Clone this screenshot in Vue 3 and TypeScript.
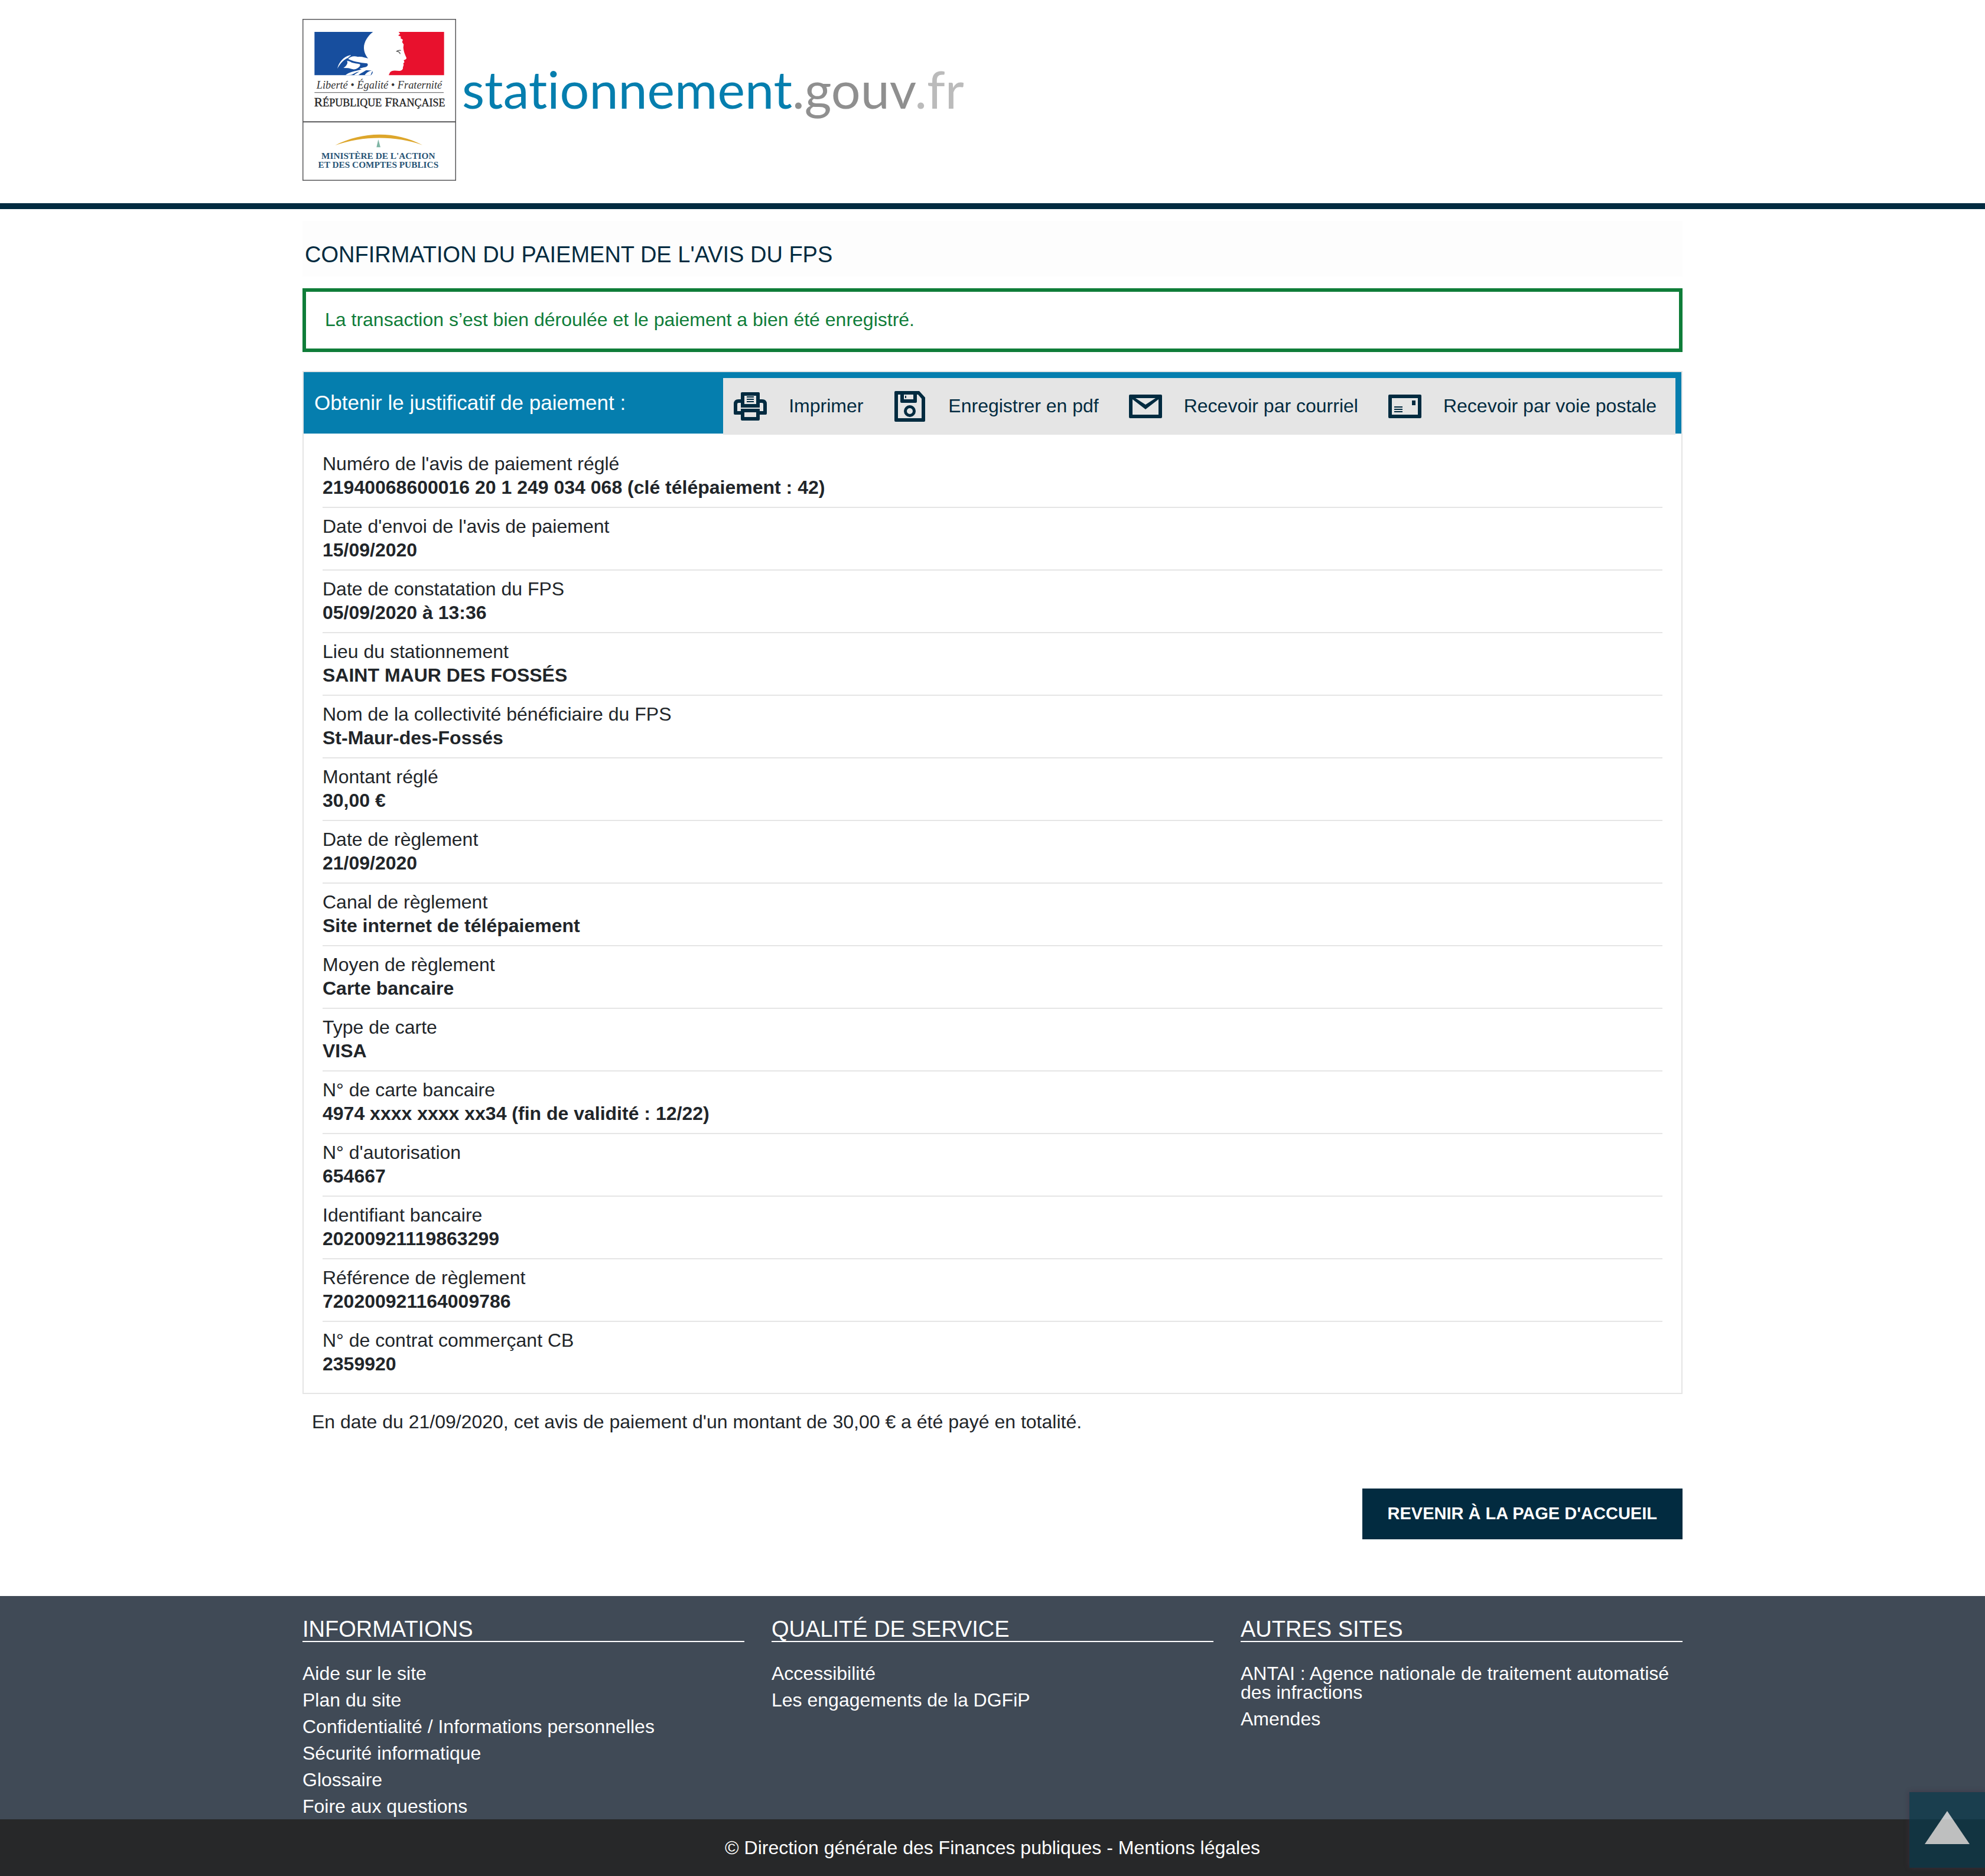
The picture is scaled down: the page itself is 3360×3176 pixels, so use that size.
<script setup lang="ts">
interface Detail {
  label: string
  value: string
}

interface LinkGroup {
  title: string
  links: string[]
}

const details: Detail[] = [
  { label: "Numéro de l'avis de paiement réglé", value: '21940068600016 20 1 249 034 068 (clé télépaiement : 42)' },
  { label: "Date d'envoi de l'avis de paiement", value: '15/09/2020' },
  { label: 'Date de constatation du FPS', value: '05/09/2020 à 13:36' },
  { label: 'Lieu du stationnement', value: 'SAINT MAUR DES FOSSÉS' },
  { label: 'Nom de la collectivité bénéficiaire du FPS', value: 'St-Maur-des-Fossés' },
  { label: 'Montant réglé', value: '30,00 €' },
  { label: 'Date de règlement', value: '21/09/2020' },
  { label: 'Canal de règlement', value: 'Site internet de télépaiement' },
  { label: 'Moyen de règlement', value: 'Carte bancaire' },
  { label: 'Type de carte', value: 'VISA' },
  { label: 'N° de carte bancaire', value: '4974 xxxx xxxx xx34 (fin de validité : 12/22)' },
  { label: "N° d'autorisation", value: '654667' },
  { label: 'Identifiant bancaire', value: '20200921119863299' },
  { label: 'Référence de règlement', value: '720200921164009786' },
  { label: 'N° de contrat commerçant CB', value: '2359920' },
]

const groups: LinkGroup[] = [
  {
    title: 'INFORMATIONS',
    links: [
      'Aide sur le site',
      'Plan du site',
      'Confidentialité / Informations personnelles',
      'Sécurité informatique',
      'Glossaire',
      'Foire aux questions',
    ],
  },
  { title: 'QUALITÉ DE SERVICE', links: ['Accessibilité', 'Les engagements de la DGFiP'] },
  {
    title: 'AUTRES SITES',
    links: ['ANTAI : Agence nationale de traitement automatisé des infractions', 'Amendes'],
  },
]

const print = () => window.print()
const scrollToTop = () => window.scrollTo({ top: 0 })
</script>

<template>
  <div class="page">
    <header class="site-header">
      <a class="container brand" href="#">
        <svg class="emblem" viewBox="0 0 780 822" role="img" aria-label="République Française">
          <rect x="2" y="2" width="776" height="818" fill="#fff" stroke="#58585a" stroke-width="5" />
          <path d="M2 523H778" stroke="#58585a" stroke-width="6" />
          <path
            fill="#174e9e"
            d="M61 66H358C334 84 311 116 312 148C313 172 322 186 333 201C320 198 300 190 282 193C262 186 244 190 232 203C250 214 290 222 328 226C338 234 328 246 312 246L290 252C300 262 326 260 345 262C362 264 358 276 348 286H61Z"
          />
          <path
            fill="#fff"
            d="M177 253C184 222 208 190 244 184C250 188 236 190 232 198C212 204 192 226 177 253Z M208 249C226 236 232 224 226 212L240 216C252 226 276 226 292 230C296 240 284 248 272 254C256 260 246 252 232 250Z M218 286C238 270 258 268 280 262C306 256 320 250 334 240L338 250C324 264 300 272 284 286H262C272 276 284 272 288 268C266 272 252 286 244 284Z M316 286C322 276 336 264 356 262L346 286Z"
          />
          <path
            fill="#e8112d"
            d="M719 66H488L496 76L486 84L500 90L498 98L510 106L506 118L514 130L512 146C514 166 520 180 528 198C528 206 518 208 514 210L518 220L512 226L514 234L510 246C512 256 504 264 490 264C470 262 452 260 444 272L438 286H719Z"
          />
          <path d="M476 166C484 160 492 158 500 160M480 164C486 168 494 166 496 178" fill="none" stroke="#555" stroke-width="4" />
          <text class="motto" x="390" y="353">Liberté • Égalité • Fraternité</text>
          <path d="M61 374H717" stroke="#77777a" stroke-width="4" />
          <text class="republic" x="392" y="443">R<tspan class="small">ÉPUBLIQUE</tspan> F<tspan class="small">RANÇAISE</tspan></text>
          <path fill="#dda62b" d="M166 642C300 572 470 566 610 641C470 590 300 594 166 642Z" />
          <path fill="#7fb5a5" d="M385 612L396 652H376Z" />
          <text class="ministry" x="385" y="710">MINISTÈRE DE L'ACTION</text>
          <text class="ministry" x="385" y="755">ET DES COMPTES PUBLICS</text>
        </svg>
        <span class="wordmark">stationnement<span class="gouv">.gouv</span><span class="fr">.fr</span></span>
      </a>
    </header>

    <main class="container">
      <h1>CONFIRMATION DU PAIEMENT DE L'AVIS DU FPS</h1>

      <p class="notice" role="status">La transaction s’est bien déroulée et le paiement a bien été enregistré.</p>

      <section class="receipt">
        <div class="receipt-head">
          <h2>Obtenir le justificatif de paiement :</h2>
          <div class="actions">
            <button type="button" @click="print">
              <svg class="icon" viewBox="0 0 60 52" aria-hidden="true">
                <path
                  fill-rule="evenodd"
                  d="M16 2H44Q46 2 46 4V14H50Q58 14 58 22V38Q58 40 56 40H46V47Q46 50 44 50H16Q14 50 14 47V40H4Q2 40 2 38V22Q2 14 10 14H14V4Q14 2 16 2Z M20 8V22H40V8Z M14 20H10Q8 20 8 22V34H14V30H46V34H52V22Q52 20 50 20H46V28H14Z M20 36V44H40V36Z"
                />
                <path d="M24 9H36V11H24Z M24 13H36V15H24Z M24 17H36V19H24Z" />
              </svg>
              <span>Imprimer</span>
            </button>
            <button type="button">
              <svg class="icon" viewBox="0 0 60 52" aria-hidden="true">
                <path
                  fill-rule="evenodd"
                  d="M6 0H46L56 11V50Q56 52 54 52H6Q4 52 4 50V2Q4 0 6 0Z M10 6V46H50V13L44 6H42V18Q42 20 40 20H16Q14 20 14 18V6Z M20 6V14H36V6Z M30 24A10 10 0 1 1 30 44A10 10 0 1 1 30 24Z M30 29A5 5 0 1 0 30 39A5 5 0 1 0 30 29Z"
                />
                <path d="M22 8H24V12H22Z" />
              </svg>
              <span>Enregistrer en pdf</span>
            </button>
            <button type="button">
              <svg class="icon" viewBox="0 0 60 52" aria-hidden="true">
                <path
                  fill-rule="evenodd"
                  d="M4 6H56Q58 6 58 8V44Q58 46 56 46H4Q2 46 2 44V8Q2 6 4 6Z M8 14V40H52V14L30 31Z M13 12L30 23L47 12Z"
                />
              </svg>
              <span>Recevoir par courriel</span>
            </button>
            <button type="button">
              <svg class="icon" viewBox="0 0 60 52" aria-hidden="true">
                <path
                  fill-rule="evenodd"
                  d="M4 6H56Q58 6 58 8V44Q58 46 56 46H4Q2 46 2 44V8Q2 6 4 6Z M8 12V40H52V12Z"
                />
                <path d="M42 16H48V24H42Z M12 26H26V28H12Z M12 30H26V32H12Z M12 34H26V36H12Z" />
              </svg>
              <span>Recevoir par voie postale</span>
            </button>
          </div>
        </div>
        <dl class="details">
          <div v-for="detail in details" :key="detail.label" class="detail">
            <dt>{{ detail.label }}</dt>
            <dd>{{ detail.value }}</dd>
          </div>
        </dl>
      </section>

      <p class="summary">En date du 21/09/2020, cet avis de paiement d'un montant de 30,00 € a été payé en totalité.</p>

      <div class="return">
        <button type="button">REVENIR À LA PAGE D'ACCUEIL</button>
      </div>
    </main>

    <footer>
      <div class="container groups">
        <nav v-for="group in groups" :key="group.title" :aria-label="group.title">
          <h2>{{ group.title }}</h2>
          <ul>
            <li v-for="link in group.links" :key="link"><a href="#">{{ link }}</a></li>
          </ul>
        </nav>
      </div>
      <p class="legal">© Direction générale des Finances publiques - <a href="#">Mentions légales</a></p>
    </footer>

    <button class="to-top" type="button" aria-label="Haut de page" @click="scrollToTop">
      <svg viewBox="0 0 128 128" aria-hidden="true"><path d="M64 32L102 88H26Z" fill="#fff" /></svg>
    </button>
  </div>
</template>

<style>
body {
  margin: 0;
  background: #fff;
}
</style>

<style scoped>
.page {
  font-family: 'Liberation Sans', Arial, sans-serif;
  font-size: 32px;
  line-height: 40px;
  color: #212529;
}

.container {
  box-sizing: border-box;
  width: 100%;
  max-width: 2336px;
  margin: 0 auto;
}

h1,
h2,
p,
dl,
dd,
ul {
  margin: 0;
  padding: 0;
}

a {
  color: inherit;
  text-decoration: none;
}

button {
  border: 0;
  margin: 0;
  padding: 0;
  font: inherit;
  cursor: pointer;
}

.site-header {
  padding: 32px 0 38px;
  border-bottom: 10px solid #022b40;
}

.brand {
  display: flex;
  align-items: flex-start;
  gap: 10px;
}

.emblem {
  flex: none;
  width: 260px;
  height: 274px;
}

.emblem text {
  font-family: 'Liberation Serif', serif;
  text-anchor: middle;
}

.emblem .motto {
  font-size: 55px;
  font-style: italic;
  fill: #333;
}

.emblem .republic {
  font-size: 65px;
  fill: #222;
  stroke: #222;
  stroke-width: 1;
}

.emblem .republic .small {
  font-size: 54px;
}

.emblem .ministry {
  font-size: 46px;
  font-weight: 700;
  fill: #275476;
}

.wordmark {
  padding-top: 62px;
  font-family: 'Century Gothic', 'URW Gothic', Lato, sans-serif;
  font-size: 88px;
  font-variant-ligatures: none;
  line-height: 112px;
  color: #057eae;
}

.gouv {
  color: #8f8f8f;
}

.fr {
  color: #bbb;
}

h1 {
  margin: 20px 0;
  padding: 34px 4px 14px;
  background: #fdfdfd;
  font-size: 38px;
  font-weight: 400;
  line-height: 46px;
  color: #022b40;
}

.notice {
  padding: 27px 32px 29px;
  border: 6px solid #0f7d39;
  color: #0f7d39;
}

.receipt {
  margin-top: 32px;
  border: 2px solid #e5e5e5;
}

.receipt-head {
  display: flex;
  justify-content: space-between;
  height: 104px;
  padding: 0 10px 0 18px;
  box-sizing: border-box;
  background: #057eae;
}

.receipt-head h2 {
  font-size: 35px;
  font-weight: 400;
  line-height: 104px;
  color: #fff;
}

.actions {
  display: flex;
  gap: 49px;
  height: 96px;
  margin-top: 10px;
  padding: 0 32px 0 16px;
  background: #e5e5e5;
}

.actions button {
  display: flex;
  align-items: center;
  gap: 35px;
  background: none;
  color: #022b40;
  white-space: nowrap;
}

.actions span {
  padding-bottom: 2px;
}

.icon {
  width: 60px;
  height: 52px;
  fill: #022b40;
}

.details {
  padding: 20px 32px 16px;
}

.detail {
  padding: 11px 0 13px;
  border-bottom: 2px solid #e5e5e5;
}

.detail:last-child {
  border-bottom: 0;
}

dd {
  font-weight: 700;
}

.summary {
  padding: 27px 16px 0;
}

.return {
  display: flex;
  justify-content: flex-end;
  padding: 93px 0 96px;
}

.return button {
  padding: 0 43px 2px;
  background: #022b40;
  font-size: 29px;
  font-weight: 700;
  line-height: 84px;
  color: #fff;
}

footer {
  background: #404a56;
  color: #fff;
}

.groups {
  display: grid;
  grid-template-columns: repeat(3, 1fr);
  gap: 46px;
  padding-top: 36px;
}

footer h2 {
  margin-bottom: 37px;
  border-bottom: 2px solid #fff;
  font-size: 38px;
  font-weight: 400;
  line-height: 40px;
}

footer ul {
  list-style: none;
}

footer li {
  padding-bottom: 13px;
  line-height: 32px;
}

footer li:nth-child(6) {
  padding-bottom: 6px;
}

.legal {
  background: #272829;
  line-height: 96px;
  text-align: center;
}

.to-top {
  position: fixed;
  right: 0;
  bottom: 14px;
  width: 128px;
  height: 128px;
  background: #0a394c;
  box-shadow: 0 0 8px #422f41;
  opacity: 0.7;
}

.to-top svg {
  display: block;
}
</style>
